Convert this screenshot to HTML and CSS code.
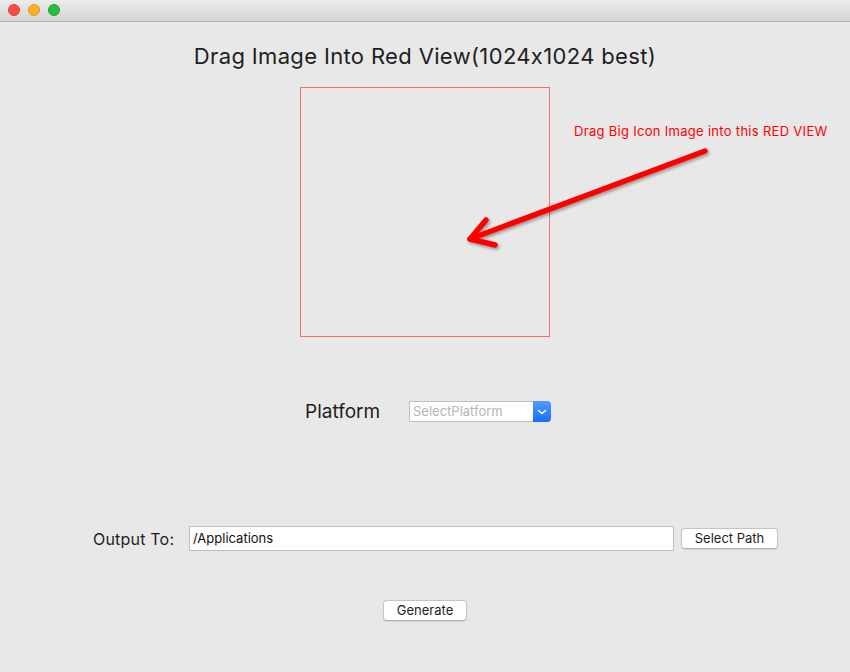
FILE: index.html
```html
<!DOCTYPE html>
<html>
<head>
<meta charset="utf-8">
<link rel="stylesheet" href="styles.css">
</head>
<body>
<div class="window">
  <div class="titlebar">
    <span class="light red"></span>
    <span class="light yellow"></span>
    <span class="light green"></span>
  </div>
  <div class="content">
    <h1 class="title">Drag Image Into Red View(1024x1024 best)</h1>
    <div class="drop-zone"></div>
    <div class="platform-row">
      <span class="platform-label">Platform</span>
      <div class="popup">
        <span class="popup-text">SelectPlatform</span>
        <span class="popup-arrow">
          <svg width="18" height="21" viewBox="0 0 18 21"><path d="M5.5 9.5 L9 12.5 L12.5 9.5" fill="none" stroke="#fff" stroke-width="1.6" stroke-linecap="round" stroke-linejoin="round"/></svg>
        </span>
      </div>
    </div>
    <div class="output-row">
      <span class="output-label">Output To:</span>
      <div class="path-field">/Applications</div>
      <button class="mac-btn select-path">Select Path</button>
    </div>
    <div class="generate-row">
      <button class="mac-btn generate">Generate</button>
    </div>
    <div class="hint">Drag Big Icon Image into this RED VIEW</div>
    <svg class="arrow" width="850" height="650" viewBox="0 0 850 650">
      <defs>
        <filter id="sh" x="-20%" y="-20%" width="140%" height="140%">
          <feDropShadow dx="1.5" dy="2" stdDeviation="1.5" flood-color="#000" flood-opacity="0.35"/>
        </filter>
      </defs>
      <g filter="url(#sh)" stroke="#ff0000" stroke-width="5.5" stroke-linecap="round" stroke-linejoin="round" fill="none">
        <path d="M705 129 L470 217"/>
        <path d="M486 198 L470 217 L495 223"/>
      </g>
    </svg>
  </div>
</div>
</body>
</html>
```
FILE: styles.css
```css
* { box-sizing: border-box; }
html, body {
  margin: 0;
  padding: 0;
  background: #e8e8e8;
}
body {
  font-family: "Inter", "Noto Sans", "Liberation Sans", sans-serif;
  color: #1e1e1e;
}
.window {
  width: 850px;
  height: 672px;
  background: #e8e8e8;
  overflow: hidden;
}
.titlebar {
  height: 22px;
  background: linear-gradient(#ececec, #d4d4d4);
  border-bottom: 1px solid #b3b3b3;
  display: flex;
  align-items: center;
  gap: 8px;
  padding-left: 8px;
  padding-bottom: 1px;
}
.light {
  width: 12px;
  height: 12px;
  border-radius: 50%;
  display: block;
}
.light.red { background: #fc4a4a; border: 0.5px solid #de3a3a; }
.light.yellow { background: #fdb124; border: 0.5px solid #de9a1c; }
.light.green { background: #2ac03a; border: 0.5px solid #1fa02d; }

.content {
  position: relative;
  display: flex;
  flex-direction: column;
  align-items: center;
}
.title {
  margin: 21px 0 0;
  font-size: 22px;
  line-height: 26px;
  font-weight: 400;
  letter-spacing: 0.35px;
  color: #1e1e1e;
  height: 24px;
}
.drop-zone {
  margin-top: 20px;
  width: 250px;
  height: 250px;
  border: 1px solid #f07070;
}
.platform-row {
  margin-top: 64px;
  width: 850px;
  display: flex;
  align-items: center;
  padding-left: 305px;
  height: 21px;
}
.platform-label {
  font-size: 19px;
  width: 104px;
  color: #1e1e1e;
}
.popup {
  width: 142px;
  height: 21px;
  display: flex;
  background: #fff;
  border: 1px solid #bdbdbd;
  border-right: none;
  border-radius: 1px 4px 4px 1px;
}
.popup-text {
  flex: 1;
  font-size: 13px;
  line-height: 19px;
  padding-left: 3px;
  color: #b5b5b5;
}
.popup-arrow {
  width: 18px;
  height: 21px;
  margin-top: -1px;
  background: linear-gradient(#4f9cff, #1b6cfd);
  border-radius: 0 4px 4px 0;
  display: block;
}
.popup-arrow svg { display: block; }

.output-row {
  margin-top: 104px;
  width: 850px;
  height: 25px;
  display: flex;
  align-items: center;
  padding-left: 93px;
}
.output-label {
  font-size: 16px;
  letter-spacing: 0.2px;
  width: 96px;
  color: #1e1e1e;
}
.path-field {
  width: 485px;
  height: 25px;
  background: #fff;
  border: 1px solid #bdbdbd;
  font-size: 13px;
  line-height: 23px;
  padding-left: 3px;
  color: #111;
}
.mac-btn {
  font-family: inherit;
  font-size: 13px;
  color: #1e1e1e;
  background: #fff;
  border: 1px solid #c4c4c4;
  border-bottom-color: #b0b0b0;
  border-radius: 4px;
  height: 21px;
  padding: 0;
  line-height: 19px;
  box-shadow: 0 0.5px 1px rgba(0,0,0,0.08);
}
.select-path {
  width: 97px;
  margin-left: 7px;
}
.generate-row {
  margin-top: 49px;
  display: flex;
  justify-content: center;
  width: 850px;
}
.generate {
  width: 84px;
}
.hint {
  position: absolute;
  left: 574px;
  top: 100px;
  font-size: 13px;
  letter-spacing: 0.3px;
  line-height: 18px;
  color: #ff0000;
  white-space: nowrap;
}
.arrow {
  position: absolute;
  left: 0;
  top: 0;
  pointer-events: none;
}
```
